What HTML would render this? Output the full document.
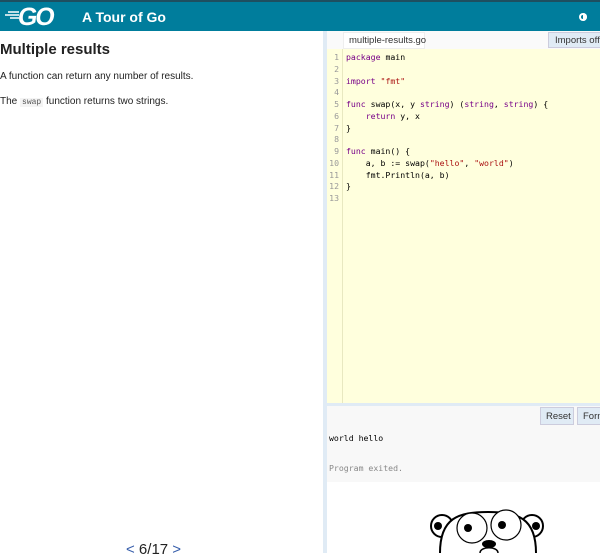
<!DOCTYPE html>
<html><head><style>
*{margin:0;padding:0;box-sizing:border-box}
body{width:600px;height:553px;overflow:hidden;font-family:"Liberation Sans",sans-serif;background:#fff;position:relative}
.hdr{position:absolute;left:0;top:0;width:600px;height:31px;background:#007d9c;border-top:2px solid #1e4f60}
.logo{position:absolute;left:18px;top:1px;color:#fff;font-weight:bold;font-size:25px;letter-spacing:-2px;transform:skewX(-8deg)}
.title{position:absolute;left:82px;top:7px;color:#fff;font-weight:bold;font-size:14px}
.left{position:absolute;left:0;top:31px;width:323px;height:522px}
h1{position:absolute;left:0;top:10px;font-size:15px;font-weight:bold;color:#222}
.p{position:absolute;left:0;font-size:10px;color:#222}
code{font-family:"Liberation Mono",monospace;font-size:8px;background:#f4f4f4;color:#555;padding:0 2px}
.div{position:absolute;left:323px;top:31px;width:4px;height:522px;background:#e0ebf5}
.tabbar{position:absolute;left:327px;top:31px;width:273px;height:18px;background:#fafafa}
.tab{position:absolute;left:343px;top:32px;width:82px;height:17px;background:#fff;border:1px solid #eee;font-size:9.5px;color:#333;padding:2px 0 0 5px;white-space:nowrap}
.imp{position:absolute;left:548px;top:32px;width:60px;height:16px;background:#e0ebf5;border:1px solid #ccd;font-size:9.5px;color:#333;padding:2px 0 0 6px;white-space:nowrap}
.ed{position:absolute;left:327px;top:49px;width:273px;height:354px;background:#ffffdd}
.gut{position:absolute;left:327px;top:49px;width:16px;height:354px;border-right:1px solid #e8e8c0}
.code{position:absolute;top:52px;font-family:"DejaVu Sans Mono",monospace;font-size:8.2px;line-height:11.75px;white-space:pre;color:#000}
.ln{left:327px;width:12px;text-align:right;color:#999}
.k{color:#708}.s{color:#a11}
.sep{position:absolute;left:327px;top:403px;width:273px;height:3px;background:#e0ebf5}
.out{position:absolute;left:327px;top:406px;width:273px;height:76px;background:#f8f8f8}
.btn{position:absolute;top:407px;height:18px;background:#e0ebf5;border:1px solid #ccd;font-size:9.5px;color:#333;padding:3px 0 0 5px;white-space:nowrap;overflow:hidden}
.mono{position:absolute;left:329px;font-family:"DejaVu Sans Mono",monospace;font-size:8.2px}
.nav{position:absolute;left:126px;top:541px;font-size:15px;color:#222}
.nav b{color:#375eab;font-weight:normal}
</style></head><body>
<div class="hdr">
<svg style="position:absolute;left:5px;top:8px" width="14" height="10"><g stroke="#fff" stroke-width="1.5"><line x1="3" y1="2" x2="14" y2="2"/><line x1="0" y1="5" x2="14" y2="5"/><line x1="5" y1="8" x2="14" y2="8"/></g></svg>
<div class="logo">GO</div>
<div class="title">A Tour of Go</div>
<svg style="position:absolute;left:577px;top:9px" width="12" height="12" viewBox="0 0 12 12"><circle cx="6" cy="6" r="4" fill="#fff"/><circle cx="6" cy="6" r="2" fill="#007d9c"/><path d="M6 6 L6 2 A4 4 0 0 1 6 10Z" fill="#fff"/></svg>
</div>
<div class="left">
<h1>Multiple results</h1>
<div class="p" style="top:40px">A function can return any number of results.</div>
<div class="p" style="top:65px">The <code>swap</code> function returns two strings.</div>
</div>
<div class="div"></div>
<div class="tabbar"></div>
<div class="tab">multiple-results.go</div>
<div class="imp">Imports off</div>
<div class="ed"></div><div class="gut"></div>
<div class="code ln">1
2
3
4
5
6
7
8
9
10
11
12
13</div>
<div class="code" style="left:346px"><span class="k">package</span> main

<span class="k">import</span> <span class="s">"fmt"</span>

<span class="k">func</span> swap(x, y <span class="k">string</span>) (<span class="k">string</span>, <span class="k">string</span>) {
    <span class="k">return</span> y, x
}

<span class="k">func</span> main() {
    a, b := swap(<span class="s">"hello"</span>, <span class="s">"world"</span>)
    fmt.Println(a, b)
}
</div>
<div class="sep"></div>
<div class="out"></div>
<div class="btn" style="left:540px;width:34px">Reset</div>
<div class="btn" style="left:577px;width:40px">Format</div>
<div class="mono" style="top:433px;color:#000">world hello</div>
<div class="mono" style="top:463px;color:#888">Program exited.</div>
<svg style="position:absolute;left:428px;top:508px" width="120" height="45" viewBox="0 0 120 45">
<g fill="#fff" stroke="#000" stroke-width="2">
<circle cx="14" cy="18" r="11"/><circle cx="104" cy="18" r="11"/>
<path d="M12 45 C12 10 30 4 60 4 C90 4 108 10 108 45"/>
<circle cx="44" cy="20" r="15" stroke-width="1.2"/><circle cx="78" cy="17" r="15" stroke-width="1.2"/>
</g>
<circle cx="10" cy="18" r="4" fill="#000"/><circle cx="108" cy="18" r="4" fill="#000"/>
<circle cx="40" cy="20" r="4" fill="#000"/><circle cx="74" cy="17" r="4" fill="#000"/>
<ellipse cx="61" cy="36" rx="7" ry="4" fill="#000"/>
<path d="M52 45 C52 38 70 38 70 45" fill="#fff" stroke="#000" stroke-width="1.5"/>
</svg>
<div class="nav"><b>&lt;</b> 6/17 <b>&gt;</b></div>
</body></html>
